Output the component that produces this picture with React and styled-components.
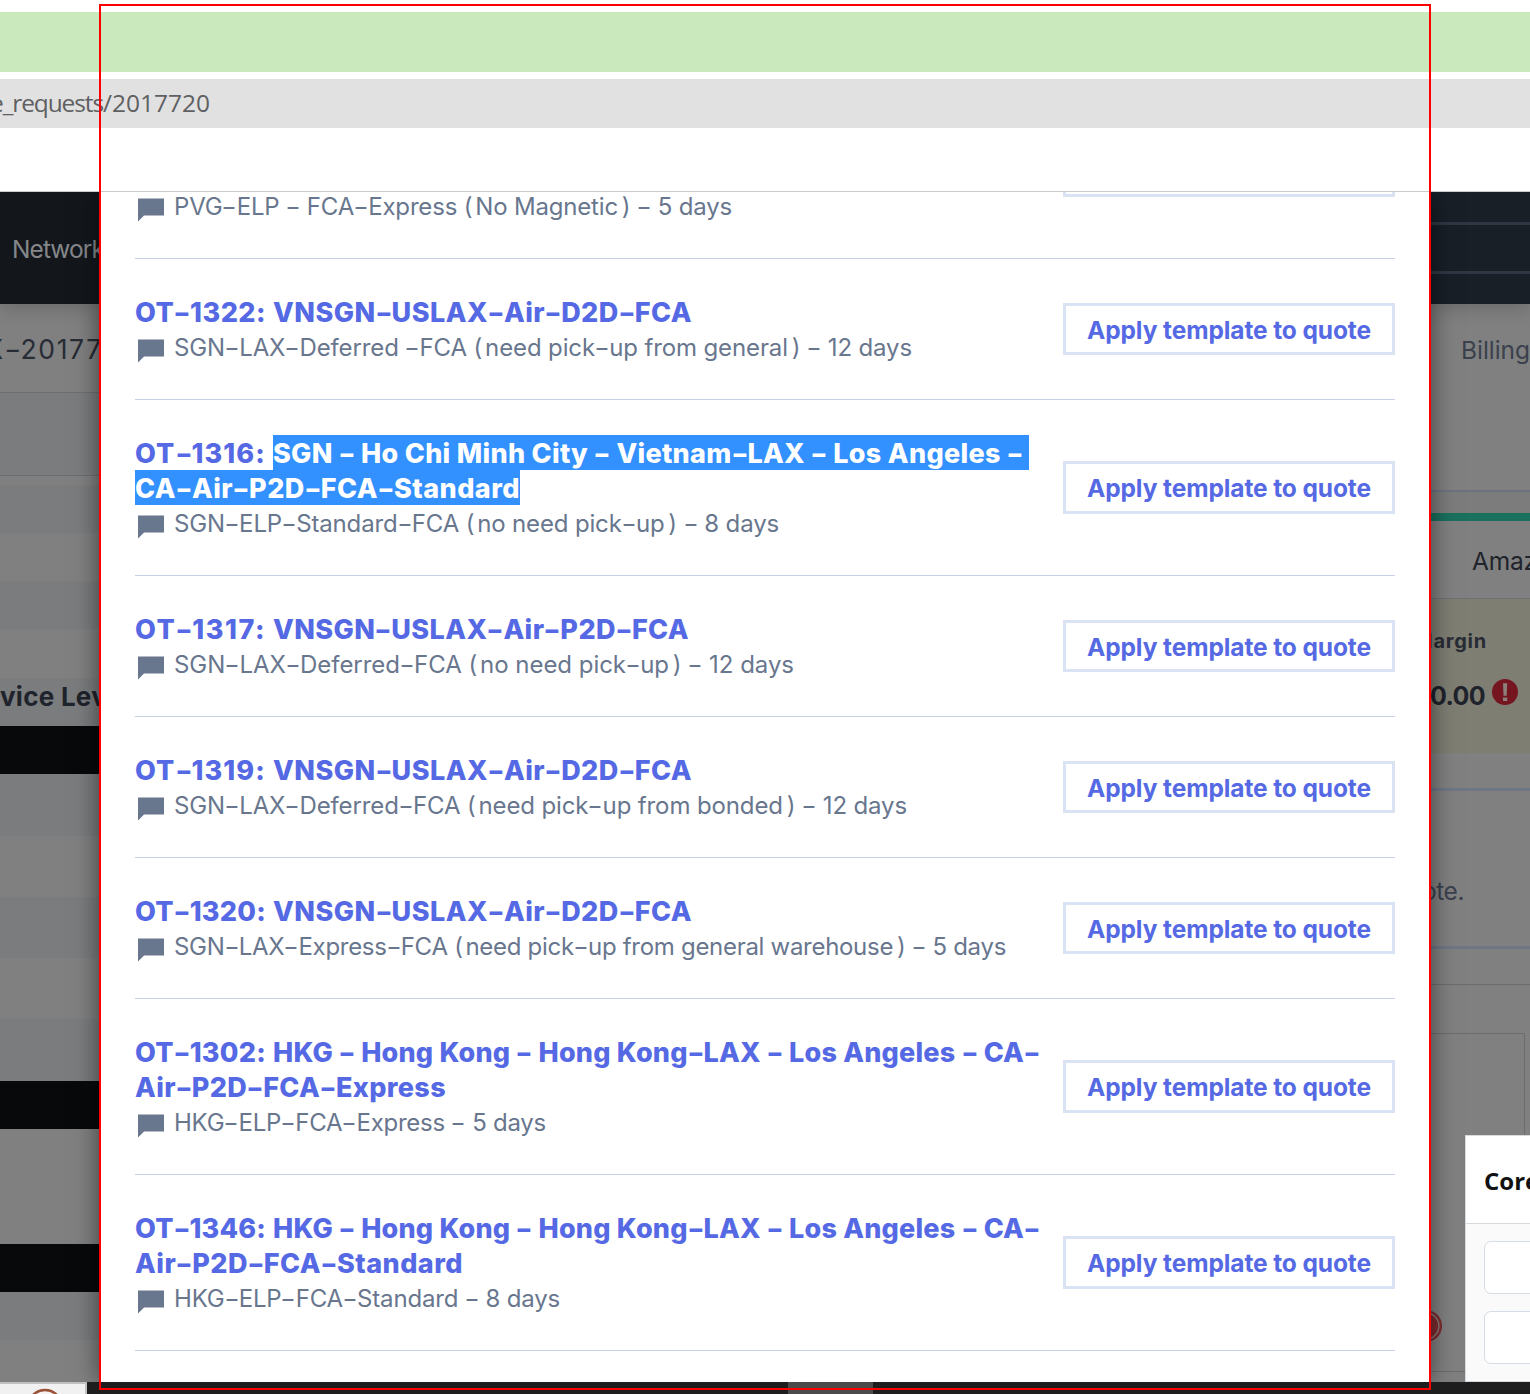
import React, { useLayoutEffect, useRef } from "react";
import styled, { createGlobalStyle, css } from "styled-components";

const Global = createGlobalStyle`
  * { box-sizing: border-box; }
  body { margin: 0; background: #fff; overflow: hidden; font-family: Inter, "Liberation Sans", sans-serif; }
`;

const Page = styled.div`
  position: relative;
  display: flex;
  flex-direction: column;
  width: 1530px;
  height: 1394px;
  overflow: hidden;
`;
const TabStrip = styled.div`
  flex: none;
  height: 60px;
  margin-top: 12px;
  background: #cae9bd;
`;
const AddressBar = styled.div`
  flex: none;
  display: flex;
  justify-content: flex-end;
  height: 49px;
  margin-top: 7px;
  padding: 0 1320px 0 0;
  background: #e1e1e1;
  color: #5f6062;
  font: 24.5px/48px "Open Sans", "Noto Sans", sans-serif;
  white-space: nowrap;
`;
const Bookmarks = styled.div`
  flex: none;
  height: 64px;
  border-bottom: 1px solid #c9cbcc;
`;
const Stage = styled.div`
  flex: none;
  display: flex;
  height: 1190px;
  background: #808080;
  overflow: hidden;
`;
const Side = styled.div`
  flex: none;
  width: 100px;
  display: flex;
  flex-direction: column;
  white-space: nowrap;
`;
const Band = styled.div`
  flex: none;
  display: flex;
  align-items: center;
  height: ${(p) => p.$h}px;
  background: ${(p) => p.$bg || "transparent"};
  padding-left: ${(p) => p.$pad || 0}px;
  ${(p) => p.$line && css`border-bottom: ${p.$lw || 1}px solid ${p.$line};`}
  ${(p) => p.$nav && css`box-shadow: 0 3px 20px rgba(0, 0, 0, 0.2);`}
`;
const BackText = styled.div`
  flex: none;
  font-size: ${(p) => p.$size || 24.5}px;
  font-weight: ${(p) => p.$weight || 400};
  color: ${(p) => p.$color};
  line-height: 30px;
  margin-top: ${(p) => p.$top || 0}px;
  margin-left: ${(p) => p.$left || 0}px;
`;
const SearchField = styled.div`
  flex: none;
  width: 100px;
  height: 52px;
  border: solid #2f3743;
  border-width: 3px 0;
`;
const Margin = styled.div`
  flex: none;
  height: 155px;
  padding-top: 27px;
  background: #7f7e73;
  border-top: 1px solid #6f7075;
`;
const Amount = styled.div`
  display: flex;
  align-items: flex-start;
  gap: 6px;
  margin-top: 25px;
`;
const AlertIcon = styled.svg`
  width: 27px;
  height: 27px;
  margin-top: -2px;
`;
const Outline = styled.div`
  flex: none;
  width: 95px;
  height: 338px;
  border: 1px solid #6c6c6c;
  border-width: 1px 1px 0 0;
`;
const Modal = styled.div`
  position: relative;
  z-index: 1;
  flex: none;
  width: 1330px;
  padding: 0 35px;
  background: #fff;
  box-shadow: 0 0 24px rgba(0, 0, 0, 0.55);
`;
const Row = styled.div`
  display: flex;
  justify-content: space-between;
  align-items: center;
  padding: 35px 0;
  border-bottom: 1px solid #c6d2e6;
`;
const CutRow = styled(Row)`
  height: 67px;
  align-items: flex-start;
  padding: 0;
`;
const CutButton = styled.div`
  width: 332px;
  height: 5px;
  border: 3px solid #dae3f4;
  border-top: 0;
`;
const CutBody = styled.div`
  margin-top: -4px;
`;
const Title = styled.div`
  height: 35px;
  font-size: 27px;
  font-weight: 800;
  line-height: 37px;
  color: #5569e4;
  white-space: nowrap;
`;
const Selected = styled.span`
  display: inline-block;
  height: 35px;
  width: ${(p) => p.$w}px;
  background: #3390ff;
  color: #fff;
  vertical-align: top;
`;
const Prefix = styled.span`
  display: inline-block;
  width: 138px;
  vertical-align: top;
`;
const Note = styled.div`
  display: flex;
  height: 35px;
  padding-left: 3px;
  gap: 10px;
  font-size: 24px;
  line-height: 38px;
  color: #68768e;
  white-space: nowrap;
`;
const NoteIcon = styled.svg`
  width: 26px;
  height: 24px;
  margin-top: 10px;
`;
const Button = styled.button`
  flex: none;
  display: flex;
  justify-content: center;
  align-items: center;
  width: 332px;
  height: ${(p) => (p.$tall ? 53 : 52)}px;
  padding: ${(p) => (p.$tall ? 1 : 2)}px 0 0;
  border: 3px solid #dae3f4;
  border-radius: 0;
  background: #fff;
  color: #5569e4;
  font: 700 24.5px/30px Inter, "Liberation Sans", sans-serif;
  white-space: nowrap;
`;
const Run = styled.span`
  display: inline-block;
  white-space: pre;
`;
const Dash = styled.span`
  display: inline-block;
  width: 0.59em;
  text-align: center;
  letter-spacing: 0;
  transform: scaleX(1.4);
`;
const Paren = styled.span`
  margin: ${(p) => (p.$open ? "0 0.12em 0 0" : "0 0 0 0.16em")};
`;
const Taskbar = styled.div`
  display: flex;
  flex: 1;
  background: #1e1e1e;
`;
const StartTile = styled.div`
  width: 87px;
  padding-left: 28px;
  background: #f1f1f1;
  border: solid #c1c1c1;
  border-width: 2px 2px 0 0;
  overflow: hidden;
`;
const ActiveTask = styled.div`
  width: 85px;
  margin-left: 701px;
  background: #4b4b4b;
`;
const Frame = styled.div`
  position: absolute;
  z-index: 3;
  left: 99px;
  top: 4px;
  width: 1332px;
  height: 1386px;
  border: 2px solid #f00;
`;
const Widget = styled.div`
  position: absolute;
  z-index: 4;
  left: 1465px;
  top: 1135px;
  width: 120px;
  height: 247px;
  border: 1px solid #d5dade;
  background: #fafafa;
`;
const WidgetHead = styled.div`
  height: 88px;
  padding-left: 18px;
  border-bottom: 1px solid #d5dade;
  background: #fff;
  color: #111;
  font: 700 24px/89px "Open Sans", "Noto Sans", sans-serif;
`;
const WidgetInput = styled.div`
  height: 53px;
  margin: 17px 0 0 18px;
  border: 1px solid #d5dce3;
  border-radius: 7px;
  background: #fff;
`;
const RecordBadge = styled.svg`
  position: absolute;
  left: 1408px;
  top: 1309px;
  width: 34px;
  height: 34px;
`;

/* Spreads a line of text across a given measure. */
function Fit({ text, width }) {
  const ref = useRef(null);
  useLayoutEffect(() => {
    const el = ref.current;
    const count = text.replace(/-/g, "").length;
    el.style.letterSpacing = "0px";
    const natural = el.getBoundingClientRect().width;
    el.style.letterSpacing = `${(width - natural) / count}px`;
  }, [text, width]);
  return (
    <Run ref={ref}>
      {text.split(/([-()])/).map((part, i) => {
        if (part === "-") return <Dash key={i}>-</Dash>;
        if (part === "(" || part === ")") return <Paren key={i} $open={part === "("}>{part}</Paren>;
        return part;
      })}
    </Run>
  );
}

function Comment({ text, width }) {
  return (
    <Note>
      <NoteIcon viewBox="0 0 26 24">
        <path d="M0 .4H26V17.5H6L0 23.5Z" fill="#68768e" />
      </NoteIcon>
      <Fit text={text} width={width} />
    </Note>
  );
}

const templates = [
  { id: "OT-1322:", name: ["VNSGN-USLAX-Air-D2D-FCA", 419], note: ["SGN-LAX-Deferred -FCA (need pick-up from general) - 12 days", 738] },
  { id: "OT-1316:", selected: true, name: ["SGN - Ho Chi Minh City - Vietnam-LAX - Los Angeles - ", 756], rest: ["CA-Air-P2D-FCA-Standard", 385], note: ["SGN-ELP-Standard-FCA (no need pick-up) - 8 days", 605] },
  { id: "OT-1317:", name: ["VNSGN-USLAX-Air-P2D-FCA", 416], note: ["SGN-LAX-Deferred-FCA (no need pick-up) - 12 days", 620] },
  { id: "OT-1319:", name: ["VNSGN-USLAX-Air-D2D-FCA", 419], note: ["SGN-LAX-Deferred-FCA (need pick-up from bonded) - 12 days", 733] },
  { id: "OT-1320:", name: ["VNSGN-USLAX-Air-D2D-FCA", 419], note: ["SGN-LAX-Express-FCA (need pick-up from general warehouse) - 5 days", 832] },
  { id: "OT-1302:", name: ["HKG - Hong Kong - Hong Kong-LAX - Los Angeles - CA-", 767], rest: ["Air-P2D-FCA-Express", 311], note: ["HKG-ELP-FCA-Express - 5 days", 372] },
  { id: "OT-1346:", name: ["HKG - Hong Kong - Hong Kong-LAX - Los Angeles - CA-", 767], rest: ["Air-P2D-FCA-Standard", 328], note: ["HKG-ELP-FCA-Standard - 8 days", 386] },
];

function Name({ value, selected }) {
  const line = <Fit text={value[0]} width={value[1]} />;
  return selected ? <Selected $w={value[1]}>{line}</Selected> : line;
}

const shade = "#7a7c7e";
const black = "#08090b";

export default function App() {
  return (
    <Page>
      <Global />
      <TabStrip />
      <AddressBar>
        <Fit text="e_requests" width={113} />
        <Fit text="/2017720" width={107} />
      </AddressBar>
      <Bookmarks />
      <Stage>
        <Side>
          <Band $h={112} $bg="#13171c" $pad={12} $nav>
            <BackText $color="#85878a" $top={2}><Fit text="Network" width={92} /></BackText>
          </Band>
          <Band $h={89} $line="#6e6e70">
            <BackText $color="#272c35" $size={26.5} $left={-15} $top={1}><Fit text="X-20177" width={118} /></BackText>
          </Band>
          <Band $h={83} $bg={shade} $line="#6c6d6f" />
          <Band $h={9} />
          <Band $h={48} $bg={shade} />
          <Band $h={48} />
          <Band $h={48} $bg={shade} />
          <Band $h={49} />
          <Band $h={48} $bg={shade}>
            <BackText $color="#1f232b" $size={26} $weight={700} $top={-10}><Fit text="vice Lev" width={107} /></BackText>
          </Band>
          <Band $h={48} $bg={black} />
          <Band $h={62} $bg={shade} />
          <Band $h={61} />
          <Band $h={61} $bg={shade} />
          <Band $h={61} />
          <Band $h={62} $bg={shade} />
          <Band $h={48} $bg={black} />
          <Band $h={115} />
          <Band $h={48} $bg={black} />
          <Band $h={48} $bg={shade} />
        </Side>
        <Modal>
          <CutRow>
            <CutBody>
              <Comment text="PVG-ELP - FCA-Express (No Magnetic) - 5 days" width={558} />
            </CutBody>
            <CutButton />
          </CutRow>
          {templates.map((t) => (
            <Row key={t.id}>
              <div>
                <Title>
                  <Prefix><Fit text={t.id} width={131} /></Prefix>
                  <Name value={t.name} selected={t.selected} />
                </Title>
                {t.rest && <Title><Name value={t.rest} selected={t.selected} /></Title>}
                <Comment text={t.note[0]} width={t.note[1]} />
              </div>
              <Button $tall={Boolean(t.rest)}><Fit text="Apply template to quote" width={284} /></Button>
            </Row>
          ))}
        </Modal>
        <Side>
          <Band $h={112} $bg="#181f27" $nav><SearchField /></Band>
          <Band $h={188} $line="#6c737f" $lw={2} $pad={31}>
            <BackText $color="#3a414d" $top={-94}><Fit text="Billing" width={69} /></BackText>
          </Band>
          <Band $h={21} $bg="#7c7c7c" />
          <Band $h={8} $bg="#19705d" />
          <Band $h={77} $pad={42}>
            <BackText $color="#1f232b" $top={2}><Fit text="Amazon" width={93} /></BackText>
          </Band>
          <Margin>
            <BackText $color="#272c35" $size={20} $weight={700} $left={-16}><Fit text="Margin" width={73} /></BackText>
            <Amount>
              <BackText $color="#1f232b" $size={25} $weight={700}><Fit text="0.00" width={55} /></BackText>
              <AlertIcon viewBox="0 0 27 27">
                <circle cx="14" cy="13" r="13" fill="#75151f" />
                <path d="M12 4.2h4.2l-.5 12.6h-3.2zM12 18.4h4.2v3.6H12z" fill="#8c7f7c" />
              </AlertIcon>
            </Amount>
          </Margin>
          <Band $h={38} $line="#6f7785" $lw={3} />
          <Band $h={158} $line="#6f7785" $lw={3}>
            <BackText $color="#3a414d" $top={44} $left={-8}><Fit text="ote." width={42} /></BackText>
          </Band>
          <Band $h={36} $line="#6c6c6c" />
          <Band $h={48} />
          <Outline />
          <Band $h={1} $bg="#6c6c6c" />
        </Side>
      </Stage>
      <Taskbar>
        <StartTile>
          <svg width="34" height="14" viewBox="0 0 34 14">
            <circle cx="17" cy="21" r="17" fill="#f6f3f2" stroke="#9a5238" strokeWidth="2.5" />
          </svg>
        </StartTile>
        <ActiveTask />
      </Taskbar>
      <RecordBadge viewBox="0 0 34 34">
        <path d="M22 1.8A15.6 15.6 0 0 1 22 32.2Z" fill="#7d2c2e" />
        <path d="M21 4.2A13.2 13.2 0 0 1 21 29.8" fill="none" stroke="#8d8080" strokeWidth="1.3" />
      </RecordBadge>
      <Frame />
      <Widget>
        <WidgetHead>Core</WidgetHead>
        <WidgetInput />
        <WidgetInput />
      </Widget>
    </Page>
  );
}
